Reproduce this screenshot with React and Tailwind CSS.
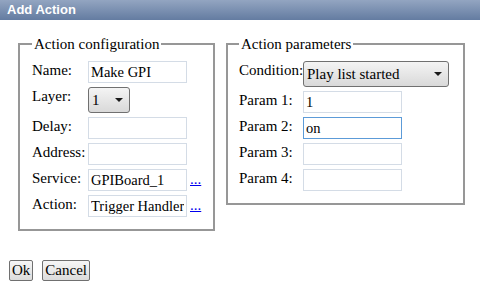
import React from 'react'

function TextBox({ value = '', focused = false }) {
  return (
    <input
      readOnly
      value={value}
      className={`h-[22px] w-[99px] px-[2px] bg-white text-[14.5px] text-black outline-none border ${
        focused ? 'border-[#5c9bd8]' : 'border-[#d4dce6]'
      }`}
    />
  )
}

function DropDown({ value, className = '' }) {
  return (
    <div
      className={`h-[26px] flex items-center justify-between pl-[3px] pr-[6px] rounded-[3px] border border-[#707070] bg-linear-to-b from-[#f4f4f4] to-[#d9d9d9] text-[15px] text-black ${className}`}
    >
      <span>{value}</span>
      <svg width="8" height="4" viewBox="0 0 8 4">
        <path d="M0 0H8L4 4Z" fill="#1a1a1a" />
      </svg>
    </div>
  )
}

function Row({ label, labelWidth, children }) {
  return (
    <div className="flex items-start">
      <span className={`${labelWidth} shrink-0 leading-[19px] whitespace-nowrap`}>{label}</span>
      {children}
    </div>
  )
}

function MoreLink() {
  return <a href="#" className="ml-[3px] mt-[1px] text-[#0000ee] underline leading-[19px]">...</a>
}

export default function App() {
  return (
    <div className="w-[483px] h-[287px] bg-white font-['Liberation_Serif','Times_New_Roman',serif] text-[15px] text-black">
      {/* Title bar */}
      <div className="h-[20px] w-[480px] flex items-center pl-[7px] bg-linear-to-b from-[#93a5c1] to-[#647ca1] font-['Liberation_Sans',Arial,sans-serif] text-[13px] font-bold text-white">
        Add Action
      </div>

      <div className="flex items-start gap-[11px] ml-[18px] mt-[15px]">
        <fieldset className="w-[197px] border-2 border-[#979797] pl-[12px] pr-[10px] pt-[8px] pb-[12px]">
          <legend className="px-[2px] leading-[18px]">Action configuration</legend>
          <div className="flex flex-col gap-[4px]">
            <Row label="Name:" labelWidth="w-[56px]">
              <TextBox value="Make GPI" />
            </Row>
            <Row label="Layer:" labelWidth="w-[56px]">
              <DropDown value="1" className="w-[42px]" />
            </Row>
            <Row label="Delay:" labelWidth="w-[56px]">
              <TextBox />
            </Row>
            <Row label="Address:" labelWidth="w-[56px]">
              <TextBox />
            </Row>
            <Row label="Service:" labelWidth="w-[56px]">
              <TextBox value="GPIBoard_1" />
              <MoreLink />
            </Row>
            <Row label="Action:" labelWidth="w-[56px]">
              <TextBox value="Trigger Handler" />
              <MoreLink />
            </Row>
          </div>
        </fieldset>

        <fieldset className="w-[239px] border-2 border-[#979797] pl-[11px] pr-[10px] pt-[8px] pb-[12px]">
          <legend className="px-[2px] leading-[18px]">Action parameters</legend>
          <div className="flex flex-col gap-[4px]">
            <Row label="Condition:" labelWidth="w-[64px]">
              <DropDown value="Play list started" className="w-[146px]" />
            </Row>
            <Row label="Param 1:" labelWidth="w-[64px]">
              <TextBox value="1" />
            </Row>
            <Row label="Param 2:" labelWidth="w-[64px]">
              <TextBox value="on" focused />
            </Row>
            <Row label="Param 3:" labelWidth="w-[64px]">
              <TextBox />
            </Row>
            <Row label="Param 4:" labelWidth="w-[64px]">
              <TextBox />
            </Row>
          </div>
        </fieldset>
      </div>

      <div className="flex gap-[9px] ml-[9px] mt-[29px]">
        <button className="h-[21px] px-[2px] border border-[#707070] rounded-[2px] bg-linear-to-b from-[#f6f6f6] to-[#dcdcdc] leading-[19px]">
          Ok
        </button>
        <button className="h-[21px] px-[2px] border border-[#707070] rounded-[2px] bg-linear-to-b from-[#f6f6f6] to-[#dcdcdc] leading-[19px]">
          Cancel
        </button>
      </div>
    </div>
  )
}
